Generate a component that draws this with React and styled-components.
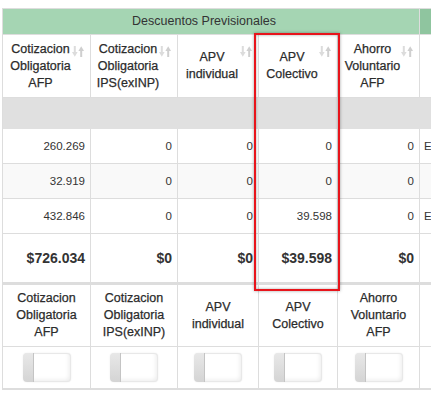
import React from 'react';
import styled, { createGlobalStyle } from 'styled-components';

const GlobalStyle = createGlobalStyle`
  body {
    margin: 0;
    background: #fff;
    font-family: "Liberation Sans", Arial, sans-serif;
    color: #333;
  }
`;

const columns = [
  { title: 'Cotizacion Obligatoria AFP', total: '$726.034', rows: ['260.269', '32.919', '432.846'] },
  { title: 'Cotizacion Obligatoria IPS(exINP)', total: '$0', rows: ['0', '0', '0'] },
  { title: 'APV individual', total: '$0', rows: ['0', '0', '0'] },
  { title: 'APV Colectivo', total: '$39.598', rows: ['0', '0', '39.598'] },
  { title: 'Ahorro Voluntario AFP', total: '$0', rows: ['0', '0', '0'] },
];

const extra = ['E', '', 'E'];

function SortIcon() {
  return (
    <SortMark width="12" height="11" viewBox="0 0 12 11">
      <rect x="1.8" y="0" width="2" height="7" fill="#dcdcdc" />
      <polygon points="0,6 5.6,6 2.8,10.8" fill="#dcdcdc" />
      <rect x="8.2" y="4" width="2" height="7" fill="#cfcfcf" />
      <polygon points="6.4,5 12,5 9.2,0.2" fill="#cfcfcf" />
    </SortMark>
  );
}

function Toggle() {
  return (
    <Switch>
      <Knob />
    </Switch>
  );
}

export default function App() {
  return (
    <Page>
      <GlobalStyle />
      <Grid>
        <GroupHead $span={5}>Descuentos Previsionales</GroupHead>
        <GroupHead $span={1} $dark />

        {columns.map(c => (
          <HeadCell key={c.title}>
            {c.title}
            <SortIcon />
          </HeadCell>
        ))}
        <HeadCell />

        <SectionRow />

        {[0, 1, 2].map(r => (
          <React.Fragment key={r}>
            {columns.map(c => (
              <DataCell key={c.title} $striped={r === 1}>
                {c.rows[r]}
              </DataCell>
            ))}
            <DataCell $striped={r === 1} $left>
              {extra[r]}
            </DataCell>
          </React.Fragment>
        ))}

        {columns.map(c => (
          <TotalCell key={c.title}>{c.total}</TotalCell>
        ))}
        <TotalCell />

        {columns.map(c => (
          <FootHead key={c.title}>{c.title}</FootHead>
        ))}
        <FootHead />

        {columns.map(c => (
          <SwitchCell key={c.title}>
            <Toggle />
          </SwitchCell>
        ))}
        <SwitchCell />
      </Grid>
      <Highlight />
    </Page>
  );
}

const Page = styled.div`
  position: relative;
  width: 431px;
  height: 396px;
  overflow: hidden;
  padding: 8px 0 0 2px;
  box-sizing: border-box;
`;

const Grid = styled.div`
  display: grid;
  grid-template-columns: 88px 87px 81px 79px 82px 12px;
  width: max-content;
  border-top: 1px solid #ddd;
  border-left: 1px solid #ddd;
`;

const Cell = styled.div`
  box-sizing: border-box;
  border-right: 1px solid #ddd;
  border-bottom: 1px solid #ddd;
  overflow: hidden;
`;

const GroupHead = styled(Cell)`
  grid-column: span ${props => props.$span};
  height: 26px;
  padding-right: ${props => (props.$dark ? 0 : 14)}px;
  background: ${props => (props.$dark ? '#8fc59f' : '#a5d5b3')};
  border-right-color: ${props => (props.$dark ? 'transparent' : '#ddd')};
  font-size: 12.5px;
  line-height: 25px;
  text-align: center;
`;

const HeadCell = styled(Cell)`
  position: relative;
  height: 63px;
  padding: 5px 18px 5px 6px;
  display: flex;
  align-items: center;
  justify-content: center;
  text-align: center;
  font-size: 12.5px;
  line-height: 17px;
  color: #2b2b2b;
  -webkit-text-stroke: 0.25px #2b2b2b;
  overflow: visible;
`;

const SortMark = styled.svg`
  position: absolute;
  top: 11px;
  right: 6px;
`;

const SectionRow = styled.div`
  grid-column: 1 / -1;
  height: 31px;
  background: #e0e0e0;
`;

const DataCell = styled(Cell)`
  height: 35px;
  padding: 0 ${props => (props.$left ? 0 : 5)}px 0 ${props => (props.$left ? 4 : 5)}px;
  display: flex;
  align-items: center;
  justify-content: ${props => (props.$left ? 'flex-start' : 'flex-end')};
  background: ${props => (props.$striped ? '#f9f9f9' : '#fff')};
  font-size: 11.5px;
  white-space: nowrap;
  border-right-color: ${props => (props.$left ? 'transparent' : '#ddd')};
`;

const TotalCell = styled(Cell)`
  height: 51px;
  border-bottom-width: 3px;
  padding: 0 5px;
  display: flex;
  align-items: center;
  justify-content: flex-end;
  font-size: 14px;
  font-weight: bold;
`;

const FootHead = styled(Cell)`
  height: 62px;
  padding: 5px 6px;
  display: flex;
  align-items: center;
  justify-content: center;
  text-align: center;
  font-size: 12.5px;
  line-height: 17px;
  color: #2b2b2b;
  -webkit-text-stroke: 0.25px #2b2b2b;
`;

const SwitchCell = styled(Cell)`
  height: 43px;
  border-bottom-width: 2px;
  display: flex;
  align-items: center;
  justify-content: center;
`;

const Switch = styled.div`
  width: 48px;
  height: 29px;
  display: flex;
  border-radius: 4px;
  background: #fff;
  overflow: hidden;
  box-shadow: inset 0 0 0 1px #e8e8e8, inset -2px -2px 4px rgba(0, 0, 0, 0.08),
    0 0 2px rgba(0, 0, 0, 0.08);
`;

const Knob = styled.span`
  width: 10px;
  border-radius: 4px 0 0 4px;
  border-right: 1px solid #c4c4c4;
  background: linear-gradient(to bottom, #e8e8e8, #d4d4d4);
`;

const Highlight = styled.div`
  position: absolute;
  left: 254px;
  top: 33px;
  width: 86px;
  height: 258px;
  box-sizing: border-box;
  border: 2px solid #e8141b;
  box-shadow: 0 0 3px rgba(0, 0, 0, 0.35), inset 0 0 3px rgba(0, 0, 0, 0.35);
  pointer-events: none;
`;
